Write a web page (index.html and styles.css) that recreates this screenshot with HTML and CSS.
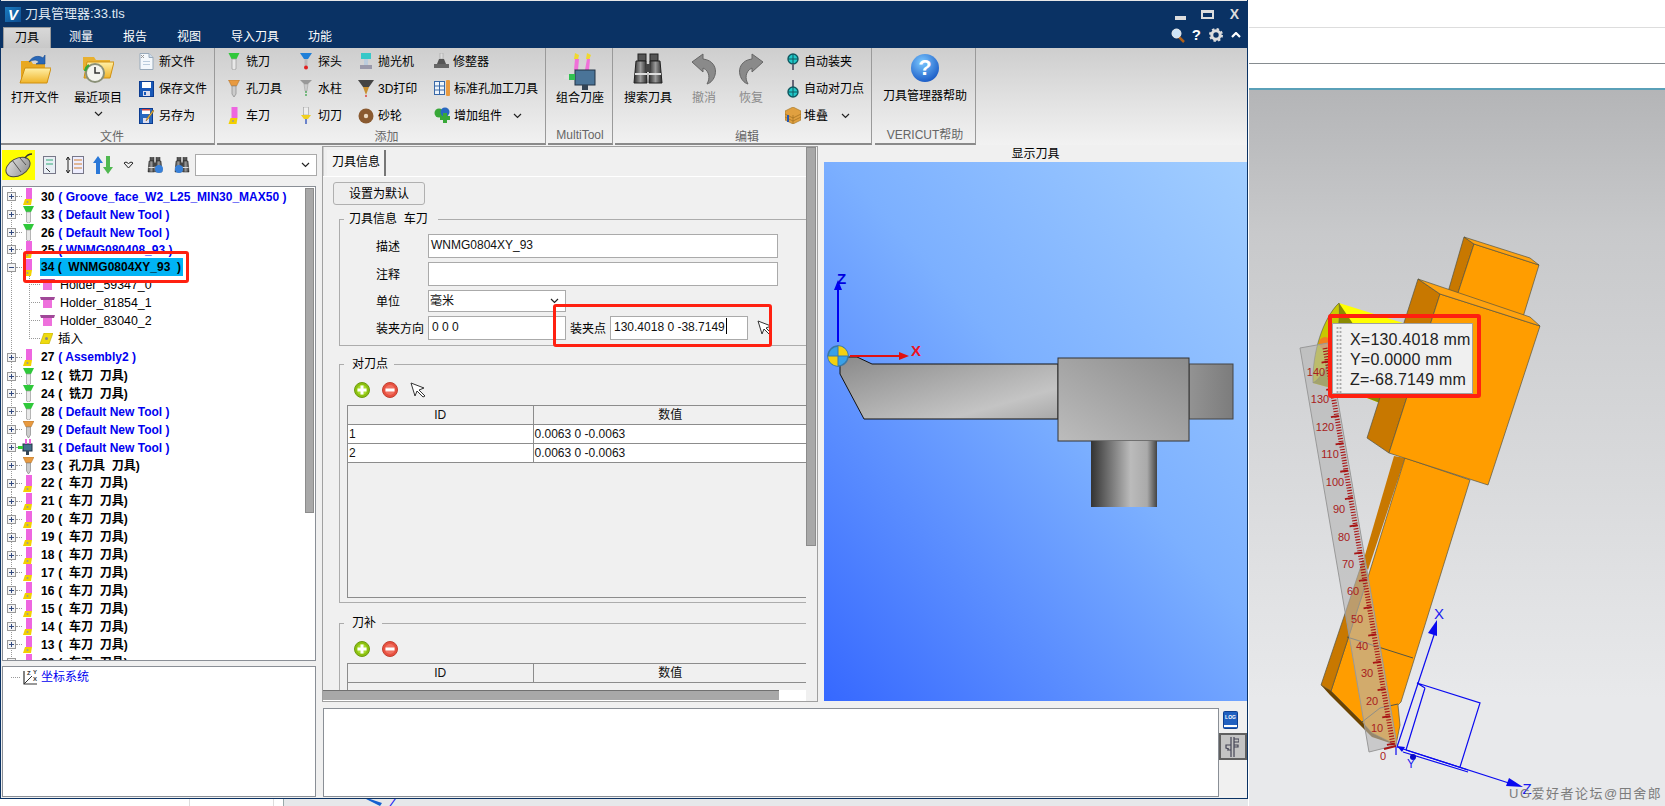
FILE: index.html
```html
<!DOCTYPE html>
<html lang="zh">
<head>
<meta charset="utf-8">
<title>刀具管理器:33.tls</title>
<link rel="stylesheet" href="styles.css">
</head>
<body>
<svg class="sprite" aria-hidden="true">
  <defs>
    <linearGradient id="gFolder" x1="0" y1="0" x2="0" y2="1"><stop offset="0" stop-color="#fff0a8"/><stop offset="1" stop-color="#f0b428"/></linearGradient>
    <linearGradient id="gBino" x1="0" y1="0" x2="1" y2="0"><stop offset="0" stop-color="#2c2c2c"/><stop offset=".5" stop-color="#9a9a9a"/><stop offset="1" stop-color="#2c2c2c"/></linearGradient>
    <linearGradient id="gMouse" x1="0" y1="0" x2="1" y2="1"><stop offset="0" stop-color="#e4e4e4"/><stop offset="1" stop-color="#8c8c8c"/></linearGradient>
    <radialGradient id="gHelp" cx=".4" cy=".3" r=".8"><stop offset="0" stop-color="#7cc8ff"/><stop offset="1" stop-color="#1050c0"/></radialGradient>
  </defs>
  <symbol id="mill" viewBox="0 0 11 17"><path d="M0 0h11L8 6H3z" fill="#2fc83a"/><path d="M3.500 6h4v10l-2 1-2-1z" fill="#e8e8e8" stroke="#999" stroke-width=".7"/></symbol>
  <symbol id="drill" viewBox="0 0 11 17"><path d="M0 0h11L8 6H3z" fill="#e89a40" stroke="#a86820" stroke-width=".5"/><path d="M3.500 6h4v8l-2 3-2-3z" fill="#ccc" stroke="#888" stroke-width=".7"/></symbol>
  <symbol id="turn" viewBox="0 0 11 17"><rect x="3" y="0" width="6" height="11" fill="#ee66e0"/><path d="M2 11h7l-1 6H0z" fill="#f2d000"/><circle cx="4.500" cy="14" r="1" fill="#999"/></symbol>
  <symbol id="asm" viewBox="0 0 16 17"><rect x="5" y="5" width="9" height="7" fill="#46708c" stroke="#234"/><rect x="0" y="7" width="5" height="3" fill="#3c3"/><rect x="7" y="0" width="2" height="5" fill="#e6d"/><rect x="11" y="0" width="2" height="5" fill="#e6d"/><rect x="8" y="12" width="3" height="4" fill="#345"/></symbol>
  <symbol id="holder" viewBox="0 0 15 12"><path d="M0 0h15l-1 3H1z" fill="#a04898"/><path d="M3 3h9v8H3z" fill="#ee70dc"/></symbol>
  <symbol id="insert" viewBox="0 0 13 11"><path d="M4 0h9L9 11H0z" fill="#eeda10" stroke="#b8a800" stroke-width=".6"/><circle cx="6.500" cy="5.500" r="1.500" fill="#888"/></symbol>
  <symbol id="plusbox" viewBox="0 0 9 9"><rect x=".5" y=".5" width="8" height="8" fill="#f4f4f4" stroke="#999"/><path d="M2 4.500h5M4.500 2v5" stroke="#334a80"/></symbol>
  <symbol id="minusbox" viewBox="0 0 9 9"><rect x=".5" y=".5" width="8" height="8" fill="#f4f4f4" stroke="#999"/><path d="M2 4.500h5" stroke="#334a80"/></symbol>
  <symbol id="add" viewBox="0 0 16 16"><circle cx="8" cy="8" r="7.500" fill="#8cc010" stroke="#6c9a10"/><circle cx="8" cy="8" r="5" fill="#a8dc30"/><path d="M8 3.500v9M3.500 8h9" stroke="#fff" stroke-width="3"/></symbol>
  <symbol id="del" viewBox="0 0 16 16"><circle cx="8" cy="8" r="7.500" fill="#e85040" stroke="#c04030"/><circle cx="8" cy="8" r="5" fill="#f07060"/><path d="M3.500 8h9" stroke="#fff" stroke-width="3"/></symbol>
  <symbol id="cursor" viewBox="0 0 16 16"><path d="M1 1l13 5-5 2 6 6-2 1-6-6-2 5z" fill="#fff" stroke="#333"/></symbol>
  <symbol id="chev" viewBox="0 0 9 6"><path d="M1 1l3.500 3.500L8 1" fill="none" stroke="#222" stroke-width="1.200"/></symbol>
  <symbol id="bino" viewBox="0 0 32 32"><rect x="6" y="1" width="8" height="7" fill="#555" stroke="#222"/><rect x="18" y="1" width="8" height="7" fill="#555" stroke="#222"/><path d="M4 8h10l1 22H2z" fill="url(#gBino)" stroke="#222"/><path d="M18 8h10l2 22H17z" fill="url(#gBino)" stroke="#222"/><rect x="14" y="11" width="4" height="8" fill="#444"/><path d="M3 21h12M17 21h12" stroke="#ddd" stroke-width="2"/></symbol>
</svg>

<div class="screen">
  <div class="app">
    <header class="titlebar">
      <div class="title-row">
        <span class="logo">V</span>
        <span class="title-text">刀具管理器:33.tls</span>
        <div class="winbtns">
          <span class="wb-min"></span>
          <span class="wb-max"></span>
          <span class="wb-close">X</span>
        </div>
      </div>
      <div class="tab-row">
        <span class="mtab mtab-on">刀具</span>
        <span class="mtab mtab-a">测量</span>
        <span class="mtab mtab-b">报告</span>
        <span class="mtab mtab-b">视图</span>
        <span class="mtab mtab-c">导入刀具</span>
        <span class="mtab mtab-d">功能</span>
        <div class="helpbtns">
          <svg width="14" height="15" viewBox="0 0 14 15"><path d="M8 9l5 5" stroke="#b06018" stroke-width="2.500"/><circle cx="5.500" cy="5.500" r="4.500" fill="#cfe6fa" stroke="#eee"/></svg>
          <span class="hb-q">?</span>
          <svg width="14" height="14" viewBox="0 0 14 14"><circle cx="7" cy="7" r="4.200" fill="none" stroke="#ddd" stroke-width="3"/><circle cx="7" cy="7" r="6" fill="none" stroke="#ddd" stroke-width="2" stroke-dasharray="2.400 2.300"/></svg>
          <svg width="10" height="6" viewBox="0 0 10 6"><path d="M1 5l4-4 4 4" fill="none" stroke="#fff" stroke-width="2.200"/></svg>
        </div>
      </div>
    </header>

    <section class="ribbon">
      <div class="group g-file">
        <div class="group-body">
          <div class="big b-open">
            <svg class="big-ico" width="32" height="32" viewBox="0 0 32 32"><path d="M2 8h10l2 3h12v19H2z" fill="#e8a820"/><path d="M6 15h26l-4 15H1z" fill="url(#gFolder)" stroke="#d09010"/><path d="M10 9c3-6 10-7 14-4l2-3v9h-9l3-2c-3-3-7-2-10 0z" fill="#2a68b8" stroke="#164a90" stroke-width=".6"/></svg>
            <span>打开文件</span>
          </div>
          <div class="big b-recent">
            <svg class="big-ico" width="32" height="32" viewBox="0 0 32 32"><path d="M1 4h11l2 3h14v10H1z" fill="#e8b030"/><path d="M5 9h27l-4 16H2z" fill="url(#gFolder)" stroke="#d09010"/><circle cx="13" cy="20" r="10" fill="#8a9078"/><circle cx="13" cy="20" r="8" fill="#f4f4ee"/><path d="M13 14v6h5" fill="none" stroke="#333" stroke-width="1.500"/><path d="M3 18a10 10 0 0 1 4-6" fill="none" stroke="#38a838" stroke-width="2.500"/></svg>
            <span>最近项目</span>
            <svg class="chev" width="9" height="6"><use href="#chev"/></svg>
          </div>
          <div class="col c-file">
            <div class="sm"><svg class="ico" width="15" height="17" viewBox="0 0 15 17"><path d="M1 .5h9l4 4v12H1z" fill="#f4f8fc" stroke="#9ab"/><path d="M10 .5v4h4" fill="#cde" stroke="#9ab"/><path d="M2 2l3 3M5 2L2 5" stroke="#999"/><rect x="4" y="8" width="7" height="1" fill="#bcd"/><rect x="4" y="11" width="7" height="1" fill="#bcd"/></svg><span>新文件</span></div>
            <div class="sm"><svg class="ico" width="15" height="16" viewBox="0 0 15 16"><rect x=".5" y=".5" width="14" height="15" fill="#1858b8" stroke="#0c3c90"/><rect x="3" y="1" width="9" height="6" fill="#fff"/><rect x="4" y="10" width="7" height="5" fill="#dde"/><rect x="5" y="11" width="2" height="3" fill="#1858b8"/></svg><span>保存文件</span></div>
            <div class="sm"><svg class="ico" width="15" height="16" viewBox="0 0 15 16"><rect x=".5" y=".5" width="13" height="15" fill="#2868c0" stroke="#0c3c90"/><rect x="3" y="1" width="8" height="5" fill="#fff"/><rect x="3" y="1" width="8" height="1.500" fill="#d04040"/><rect x="4" y="10" width="6" height="5" fill="#dde"/><path d="M7 13l1-3 6-8 1 1-6 8z" fill="#f0c040" stroke="#805010" stroke-width=".5"/></svg><span>另存为</span></div>
          </div>
        </div>
        <div class="group-label">文件</div>
      </div>

      <div class="group g-add">
        <div class="group-body">
          <div class="col c-a1">
            <div class="sm"><svg class="ico" width="12" height="17"><use href="#mill"/></svg><span>铣刀</span></div>
            <div class="sm"><svg class="ico" width="12" height="17"><use href="#drill"/></svg><span>孔刀具</span></div>
            <div class="sm"><svg class="ico" width="12" height="17"><use href="#turn"/></svg><span>车刀</span></div>
          </div>
          <div class="col c-a2">
            <div class="sm"><svg class="ico" width="12" height="17" viewBox="0 0 12 17"><path d="M0 0h12L8 6H4z" fill="#2080d8"/><rect x="4.500" y="6" width="3" height="7" fill="#bbb"/><circle cx="6" cy="14.500" r="2" fill="#e02020"/></svg><span>探头</span></div>
            <div class="sm"><svg class="ico" width="12" height="17" viewBox="0 0 12 17"><path d="M0 0h12L8 4H4z" fill="#999"/><path d="M4 4h4l-1 7H5z" fill="#ccc" stroke="#999" stroke-width=".5"/><path d="M6 11v5" stroke="#30a040" stroke-width="1.200" stroke-dasharray="2 1"/></svg><span>水柱</span></div>
            <div class="sm"><svg class="ico" width="12" height="17" viewBox="0 0 12 17"><rect x="3.500" y="0" width="5" height="8" fill="#eee" stroke="#999" stroke-width=".6"/><path d="M1 8h10L8 12H4z" fill="#f0d020"/><path d="M6 12v5" stroke="#4060c0" stroke-width="1.500"/></svg><span>切刀</span></div>
          </div>
          <div class="col c-a3">
            <div class="sm"><svg class="ico" width="14" height="17" viewBox="0 0 14 17"><rect x="2" y="0" width="10" height="6" fill="#38c8c8"/><rect x="5" y="6" width="4" height="6" fill="#bcd"/><rect x="1" y="12" width="12" height="4" fill="#99a"/></svg><span>抛光机</span></div>
            <div class="sm"><svg class="ico" width="16" height="17" viewBox="0 0 16 17"><path d="M0 0h16l-5 7H5z" fill="#444"/><path d="M5 7h6l-3 8z" fill="#c89030"/><circle cx="8" cy="16" r="1" fill="#e04040"/></svg><span>3D打印</span></div>
            <div class="sm"><svg class="ico" width="16" height="16" viewBox="0 0 16 16"><circle cx="8" cy="8" r="7.500" fill="#8a5a30"/><circle cx="8" cy="8" r="2.200" fill="#ead8c0"/></svg><span>砂轮</span></div>
          </div>
          <div class="col c-a4">
            <div class="sm"><svg class="ico" width="16" height="17" viewBox="0 0 16 17"><rect x="6" y="0" width="3" height="6" fill="#ddd" stroke="#999" stroke-width=".5"/><path d="M5 6h5l2 5H3z" fill="#555"/><rect x="0" y="11" width="15" height="4" fill="#666"/></svg><span>修整器</span></div>
            <div class="sm"><svg class="ico" width="17" height="17" viewBox="0 0 17 17"><rect x=".5" y="1.500" width="10" height="13" fill="#eef4fa" stroke="#3868a8"/><path d="M5.500 2v12M1 6h9M1 10h9" stroke="#3868a8"/><rect x="12" y="0" width="4" height="16" rx="1" fill="#e89a40"/></svg><span>标准孔加工刀具</span></div>
            <div class="sm"><svg class="ico" width="17" height="17" viewBox="0 0 17 17"><circle cx="5" cy="6" r="4.500" fill="#38a838"/><circle cx="11" cy="5" r="4.500" fill="#2868c0"/><path d="M11 6v10M6 11h10" stroke="#38a838" stroke-width="4"/></svg><span>增加组件</span><svg class="chev chev-sm" width="9" height="6"><use href="#chev"/></svg></div>
          </div>
        </div>
        <div class="group-label">添加</div>
      </div>

      <div class="group g-multi">
        <div class="group-body">
          <div class="big b-multi">
            <svg class="big-ico" width="32" height="38" viewBox="0 0 32 38"><path d="M11 0l4 2-1 5-4-1zM23 0l4 2-2 5-3-1z" fill="#f0d830"/><path d="M11 6h4l-1 11h-4zM23 6h3l-1 11h-4z" fill="#f070d8"/><rect x="11" y="17" width="20" height="15" fill="#4a7498" stroke="#234"/><rect x="5" y="21" width="6" height="6" fill="#30c050"/><rect x="0" y="22" width="5" height="4" fill="#ddd"/><rect x="18" y="32" width="6" height="5" fill="#345"/></svg>
            <span>组合刀座</span>
          </div>
        </div>
        <div class="group-label">MultiTool</div>
      </div>

      <div class="group g-edit">
        <div class="group-body">
          <div class="big b-search">
            <svg class="big-ico" width="32" height="32"><use href="#bino"/></svg>
            <span>搜索刀具</span>
          </div>
          <div class="big b-undo is-off">
            <svg class="big-ico" width="26" height="32" viewBox="0 0 26 32"><path d="M1 9l11-8v5c10 1 14 9 12 16-1 4-4 8-8 9 3-5 3-13-4-16v4z" fill="#8a8a8a" stroke="#666"/></svg>
            <span>撤消</span>
          </div>
          <div class="big b-redo is-off">
            <svg class="big-ico" width="26" height="32" viewBox="0 0 26 32"><path d="M25 9L14 1v5C4 7 0 15 2 22c1 4 4 8 8 9-3-5-3-13 4-16v4z" fill="#8a8a8a" stroke="#666"/></svg>
            <span>恢复</span>
          </div>
          <div class="col c-edit">
            <div class="sm"><svg class="ico" width="13" height="18" viewBox="0 0 13 18"><circle cx="6.500" cy="6" r="5" fill="#20c8c8" stroke="#105860" stroke-width="1.400"/><path d="M6.500 1v10M1.500 6h10" stroke="#105860"/><path d="M6.500 11v6" stroke="#667" stroke-width="2"/></svg><span>自动装夹</span></div>
            <div class="sm"><svg class="ico" width="13" height="18" viewBox="0 0 13 18"><path d="M6.500 0v7" stroke="#667" stroke-width="2"/><circle cx="6.500" cy="12" r="5" fill="#20c8c8" stroke="#105860" stroke-width="1.400"/><path d="M6.500 7v10M1.500 12h10" stroke="#105860"/></svg><span>自动对刀点</span></div>
            <div class="sm"><svg class="ico" width="16" height="17" viewBox="0 0 16 17"><path d="M0 4l8-4 8 4v9l-8 4-8-4z" fill="#e0a040" stroke="#a07020" stroke-width=".6"/><path d="M0 7l8 4 8-4M0 10l8 4 8-4M8 8v9" fill="none" stroke="#a07020" stroke-width=".7"/><rect x="2" y="8" width="2" height="7" fill="#2858b0"/></svg><span>堆叠</span><svg class="chev chev-xs" width="9" height="6"><use href="#chev"/></svg></div>
          </div>
        </div>
        <div class="group-label">编辑</div>
      </div>

      <div class="group g-help">
        <div class="group-body">
          <div class="big b-help">
            <svg class="big-ico" width="30" height="30" viewBox="0 0 30 30"><circle cx="15" cy="15" r="14" fill="url(#gHelp)"/><text x="15" y="22" class="help-q">?</text></svg>
            <span>刀具管理器帮助</span>
          </div>
        </div>
        <div class="group-label">VERICUT帮助</div>
      </div>
    </section>

    <div class="workspace">
      <aside class="left">
        <div class="toolbar">
          <span class="mouse-btn"><svg width="30" height="26" viewBox="0 0 30 26"><ellipse cx="14" cy="15" rx="13" ry="8.500" transform="rotate(-30 14 15)" fill="url(#gMouse)" stroke="#444"/><path d="M8 8l9 12M16 6l6 7" stroke="#555" fill="none"/><path d="M21 6c2-3 4-4 7-4" fill="none" stroke="#333" stroke-width="1.500"/></svg></span>
          <svg class="tb t1" width="13" height="18" viewBox="0 0 13 18"><rect x=".5" y=".5" width="12" height="17" fill="#e8eef4" stroke="#778"/><path d="M3 4h7M3 8h7" stroke="#3a7"/><path d="M3 12l4 4" stroke="#333"/></svg>
          <svg class="tb t2" width="18" height="18" viewBox="0 0 18 18"><path d="M2 1v16M0 4l2-3 2 3M0 14l2 3 2-3" fill="none" stroke="#222"/><rect x="6.500" y=".5" width="11" height="17" fill="#eef" stroke="#778"/><path d="M8 4h8M8 8h8M8 12h8" stroke="#d08030"/></svg>
          <svg class="tb t3" width="20" height="18" viewBox="0 0 20 18"><path d="M5 0l5 7H7v11H3V7H0z" fill="#2a78d8"/><path d="M15 18l5-7h-3V0h-4v11h-3z" fill="#50b850"/></svg>
          <svg class="tb t4" width="11" height="8" viewBox="0 0 11 8"><path d="M1 2l2-1 2.500 1.500L8 1l2 1-4.500 5z" fill="none" stroke="#222"/></svg>
          <svg class="tb t5" width="16" height="16" viewBox="0 0 32 32"><use href="#bino"/><circle cx="24" cy="24" r="8" fill="#3880d8"/></svg>
          <svg class="tb t6" width="16" height="16" viewBox="0 0 32 32"><use href="#bino"/><circle cx="10" cy="24" r="8" fill="#3880d8"/></svg>
          <div class="combo"><svg width="9" height="6"><use href="#chev"/></svg></div>
        </div>

        <div class="tree-panel">
          <div class="tree">
            <div class="row"><svg class="exp" width="9" height="9"><use href="#plusbox"/></svg><i class="dots"></i><svg class="ti" width="11" height="17"><use href="#turn"/></svg><b>30</b><b class="blue">( Groove_face_W2_L25_MIN30_MAX50 )</b></div>
            <div class="row"><svg class="exp" width="9" height="9"><use href="#plusbox"/></svg><i class="dots"></i><svg class="ti" width="11" height="17"><use href="#mill"/></svg><b>33</b><b class="blue">( Default New Tool )</b></div>
            <div class="row"><svg class="exp" width="9" height="9"><use href="#plusbox"/></svg><i class="dots"></i><svg class="ti" width="11" height="17"><use href="#mill"/></svg><b>26</b><b class="blue">( Default New Tool )</b></div>
            <div class="row row-short"><svg class="exp" width="9" height="9"><use href="#plusbox"/></svg><i class="dots"></i><svg class="ti" width="11" height="17"><use href="#turn"/></svg><b>25</b><b class="blue">( WNMG080408_93 )</b></div>
            <div class="row"><svg class="exp" width="9" height="9"><use href="#minusbox"/></svg><i class="dots"></i><svg class="ti" width="11" height="17"><use href="#turn"/></svg><b class="sel">34 (  WNMG0804XY_93  )</b></div>
            <div class="row child"><i class="dots-long"></i><svg class="hi" width="15" height="12"><use href="#holder"/></svg><span>Holder_59347_0</span></div>
            <div class="row child"><i class="dots-long"></i><svg class="hi" width="15" height="12"><use href="#holder"/></svg><span>Holder_81854_1</span></div>
            <div class="row child"><i class="dots-long"></i><svg class="hi" width="15" height="12"><use href="#holder"/></svg><span>Holder_83040_2</span></div>
            <div class="row child child-end"><i class="dots-long"></i><svg class="hi" width="13" height="11"><use href="#insert"/></svg><span>插入</span></div>
            <div class="row row-tall"><svg class="exp" width="9" height="9"><use href="#plusbox"/></svg><i class="dots"></i><svg class="ti" width="11" height="17"><use href="#turn"/></svg><b>27</b><b class="blue">( Assembly2 )</b></div>
            <div class="row"><svg class="exp" width="9" height="9"><use href="#plusbox"/></svg><i class="dots"></i><svg class="ti" width="11" height="17"><use href="#mill"/></svg><b>12</b><b>(  铣刀  刀具)</b></div>
            <div class="row"><svg class="exp" width="9" height="9"><use href="#plusbox"/></svg><i class="dots"></i><svg class="ti" width="11" height="17"><use href="#mill"/></svg><b>24</b><b>(  铣刀  刀具)</b></div>
            <div class="row"><svg class="exp" width="9" height="9"><use href="#plusbox"/></svg><i class="dots"></i><svg class="ti" width="11" height="17"><use href="#mill"/></svg><b>28</b><b class="blue">( Default New Tool )</b></div>
            <div class="row"><svg class="exp" width="9" height="9"><use href="#plusbox"/></svg><i class="dots"></i><svg class="ti" width="11" height="17"><use href="#drill"/></svg><b>29</b><b class="blue">( Default New Tool )</b></div>
            <div class="row"><svg class="exp" width="9" height="9"><use href="#plusbox"/></svg><i class="dots"></i><svg class="ti ti-asm" width="16" height="17"><use href="#asm"/></svg><b>31</b><b class="blue">( Default New Tool )</b></div>
            <div class="row"><svg class="exp" width="9" height="9"><use href="#plusbox"/></svg><i class="dots"></i><svg class="ti" width="11" height="17"><use href="#drill"/></svg><b>23</b><b>(  孔刀具  刀具)</b></div>
            <div class="row"><svg class="exp" width="9" height="9"><use href="#plusbox"/></svg><i class="dots"></i><svg class="ti" width="11" height="17"><use href="#turn"/></svg><b>22</b><b>(  车刀  刀具)</b></div>
            <div class="row"><svg class="exp" width="9" height="9"><use href="#plusbox"/></svg><i class="dots"></i><svg class="ti" width="11" height="17"><use href="#turn"/></svg><b>21</b><b>(  车刀  刀具)</b></div>
            <div class="row"><svg class="exp" width="9" height="9"><use href="#plusbox"/></svg><i class="dots"></i><svg class="ti" width="11" height="17"><use href="#turn"/></svg><b>20</b><b>(  车刀  刀具)</b></div>
            <div class="row"><svg class="exp" width="9" height="9"><use href="#plusbox"/></svg><i class="dots"></i><svg class="ti" width="11" height="17"><use href="#turn"/></svg><b>19</b><b>(  车刀  刀具)</b></div>
            <div class="row"><svg class="exp" width="9" height="9"><use href="#plusbox"/></svg><i class="dots"></i><svg class="ti" width="11" height="17"><use href="#turn"/></svg><b>18</b><b>(  车刀  刀具)</b></div>
            <div class="row"><svg class="exp" width="9" height="9"><use href="#plusbox"/></svg><i class="dots"></i><svg class="ti" width="11" height="17"><use href="#turn"/></svg><b>17</b><b>(  车刀  刀具)</b></div>
            <div class="row"><svg class="exp" width="9" height="9"><use href="#plusbox"/></svg><i class="dots"></i><svg class="ti" width="11" height="17"><use href="#turn"/></svg><b>16</b><b>(  车刀  刀具)</b></div>
            <div class="row"><svg class="exp" width="9" height="9"><use href="#plusbox"/></svg><i class="dots"></i><svg class="ti" width="11" height="17"><use href="#turn"/></svg><b>15</b><b>(  车刀  刀具)</b></div>
            <div class="row"><svg class="exp" width="9" height="9"><use href="#plusbox"/></svg><i class="dots"></i><svg class="ti" width="11" height="17"><use href="#turn"/></svg><b>14</b><b>(  车刀  刀具)</b></div>
            <div class="row"><svg class="exp" width="9" height="9"><use href="#plusbox"/></svg><i class="dots"></i><svg class="ti" width="11" height="17"><use href="#turn"/></svg><b>13</b><b>(  车刀  刀具)</b></div>
            <div class="row"><svg class="exp" width="9" height="9"><use href="#plusbox"/></svg><i class="dots"></i><svg class="ti" width="11" height="17"><use href="#turn"/></svg><b>20</b><b>(  车刀  刀具)</b></div>
          </div>
          <div class="tree-bar"><div class="tree-thumb"></div></div>
        </div>

        <div class="csys-panel">
          <div class="csys-row">
            <i class="csys-dots"></i>
            <svg width="16" height="17" viewBox="0 0 16 17"><path d="M2 2v13h13" fill="none" stroke="#333" stroke-width="1.200"/><path d="M2 15l8-8" stroke="#333"/><text x="5" y="6" class="csys-t">Z</text><text x="11" y="5" class="csys-t">Y</text><text x="11" y="12" class="csys-t">X</text></svg>
            <span>坐标系统</span>
          </div>
        </div>
      </aside>

      <div class="main">
        <div class="main-top">
          <div class="center">
            <div class="form-area">
              <div class="tabstrip"><span class="tab">刀具信息</span></div>
              <button class="btn-default" type="button">设置为默认</button>
              <fieldset class="fs fs-info">
                <legend>刀具信息  车刀</legend>
                <div class="frow"><label>描述</label><div class="field f-wide">WNMG0804XY_93</div></div>
                <div class="frow"><label>注释</label><div class="field f-wide"></div></div>
                <div class="frow frow-s"><label>单位</label><div class="field f-half f-sel"><span>毫米</span><svg width="9" height="6"><use href="#chev"/></svg></div></div>
                <div class="frow"><label>装夹方向</label><div class="field f-half">0 0 0</div><label class="lbl-grip">装夹点</label><div class="field f-half">130.4018 0 -38.7149<i class="caret"></i></div><svg class="pick" width="16" height="16"><use href="#cursor"/></svg></div>
              </fieldset>
              <fieldset class="fs fs-gauge">
                <legend class="lg-wide">对刀点</legend>
                <div class="iconrow"><svg width="16" height="16"><use href="#add"/></svg><svg width="16" height="16"><use href="#del"/></svg><svg width="16" height="16"><use href="#cursor"/></svg></div>
                <div class="gridbox">
                  <table class="grid">
                    <tr><th class="c-id">ID</th><th>数值</th></tr>
                    <tr><td>1</td><td>0.0063 0 -0.0063</td></tr>
                    <tr><td>2</td><td>0.0063 0 -0.0063</td></tr>
                  </table>
                </div>
              </fieldset>
              <fieldset class="fs fs-comp">
                <legend class="lg-wide">刀补</legend>
                <div class="iconrow iconrow-c"><svg width="16" height="16"><use href="#add"/></svg><svg width="16" height="16"><use href="#del"/></svg></div>
                <div class="gridbox">
                  <table class="grid">
                    <tr><th class="c-id">ID</th><th>数值</th></tr>
                  </table>
                </div>
              </fieldset>
            </div>
            <div class="vbar"><div class="vthumb"></div></div>
            <div class="hbar"><div class="hthumb"></div></div>
            <div class="corner"></div>
          </div>
          <div class="preview">
            <div class="preview-title">显示刀具</div>
            <svg class="preview-view" viewBox="824 163 423 539">
              <defs>
                <linearGradient id="gBody" x1="0" y1="0" x2="1" y2="1"><stop offset="0" stop-color="#8a8a8a"/><stop offset=".75" stop-color="#c4c4c4"/><stop offset="1" stop-color="#a8a8a8"/></linearGradient>
                <linearGradient id="gBlock" x1="1" y1="0" x2="0" y2="1"><stop offset="0" stop-color="#8c8c8c"/><stop offset="1" stop-color="#bcbcbc"/></linearGradient>
                <linearGradient id="gTail" x1="0" y1="0" x2="1" y2="0"><stop offset="0" stop-color="#939393"/><stop offset="1" stop-color="#7c7c7c"/></linearGradient>
                <linearGradient id="gCyl" x1="0" y1="0" x2="1" y2="0"><stop offset="0" stop-color="#333"/><stop offset=".3" stop-color="#777"/><stop offset=".6" stop-color="#bbb"/><stop offset=".85" stop-color="#aaa"/><stop offset="1" stop-color="#444"/></linearGradient>
              </defs>
              <path d="M840 367v8l24 45h194v-55H872l-15-7h-9z" fill="url(#gBody)" stroke="#111" stroke-width="1"/>
              <rect x="1189" y="365" width="44" height="55" fill="url(#gTail)" stroke="#444" stroke-width="1"/>
              <rect x="1058" y="359" width="131" height="83" fill="url(#gBlock)" stroke="#333" stroke-width="1"/>
              <rect x="1091" y="442" width="66" height="66" fill="url(#gCyl)"/>
              <path d="M838 343v-55" stroke="#0000f0" stroke-width="2"/>
              <path d="M838 281l4 10h-8z" fill="#0000f0"/>
              <text x="837" y="285" class="ax ax-z">Z</text>
              <path d="M850 357h50" stroke="#e01010" stroke-width="2"/>
              <path d="M909 357l-10 4v-8z" fill="#e01010"/>
              <text x="911" y="357" class="ax ax-x">X</text>
              <circle cx="838" cy="357" r="10" fill="#38a0e8" stroke="#3878a8" stroke-width="1.500"/>
              <path d="M838 347a10 10 0 0 1 10 10h-10zM838 367a10 10 0 0 1-10-10h10z" fill="#f4d010"/>
              <path d="M827 357h22M838 346v22" stroke="#3878a8" stroke-width="1"/>
            </svg>
          </div>
        </div>
        <div class="log-row">
          <div class="log"></div>
          <div class="log-tools">
            <svg class="log-book" width="15" height="18" viewBox="0 0 15 18"><rect x=".5" y=".5" width="14" height="17" rx="1" fill="#2060c0" stroke="#104090"/><rect x="1" y="14" width="13" height="2" fill="#fff"/><text x="7.500" y="8" class="log-t">LOG</text></svg>
            <span class="log-active"><svg width="14" height="22" viewBox="0 0 14 22"><path d="M6 1v20M9 1v20M9 3h5v3H9M9 9h4v2H9M6 9H1v3l3 1M6 14H2" fill="none" stroke="#445" stroke-width="1.200"/></svg></span>
          </div>
        </div>
      </div>
    </div>
  </div>

  <div class="scene">
    <div class="scene-top"></div>
    <div class="scene-mid"></div>
    <svg class="scene-view" viewBox="1249 90 416 716">
      <path d="M1464 237l10 7-17 52-9-4z" fill="#c87800" stroke="#554" stroke-width=".7"/>
      <path d="M1474 244l65 21-16 52-66-21z" fill="#ff9d00" stroke="#554" stroke-width=".7"/>
      <path d="M1464 237l66 21 9 7-65-21z" fill="#ffa310" stroke="#554" stroke-width=".7"/>

      <path d="M1339 303l64 20-3 72-7 13-26-10-54-15c1-30 10-65 26-80z" fill="#ffff00"/>
      <path d="M1339 303c-16 15-25 50-26 80l54 15 26 10 10-10" fill="#8a8a00"/>
      <path d="M1339 303c3 30-10 70-26 80-1-30 10-65 26-80z" fill="#c8c800" stroke="#555" stroke-width=".6"/>
      <circle cx="1325" cy="343" r="6" fill="#f08020"/>

      <path d="M1394 456l11 2-37 112-5-8z" fill="#c87800"/>
      <path d="M1405 458l65 22-69 222-3 3 2 20-4 20-24-12-10-11-31-31 37-114z" fill="#ff9d00" stroke="#554" stroke-width=".7"/>
      <path d="M1363 560l5 17-37 114-10-6z" fill="#c87800" stroke="#554" stroke-width=".7"/>
      <path d="M1321 685l10 6 31 31 10 11 24 12-24-8-12-12-30-30z" fill="#6c4400"/>
      <path d="M1347 637l66 21M1362 722l18-14 18-4" fill="none" stroke="#554" stroke-width="1"/>

      <path d="M1418 279l22 15-51 159-22-15z" fill="#c87800" stroke="#554" stroke-width=".7"/>
      <path d="M1440 294l100 32-52 159-99-32z" fill="#ff9d00" stroke="#554" stroke-width=".7"/>
      <path d="M1418 279l112 38 10 9-100-32z" fill="#ffa310" stroke="#554" stroke-width=".7"/>

      <path d="M1300 348l28-5 69 402-28 7z" fill="#b4b4b4" fill-opacity=".6" stroke="#999" stroke-width="1"/>
      <path d="M1393 745l-68-397" stroke="#a81414" stroke-width="5" stroke-dasharray="1.100 1.670"/>
      <path d="M1391 745l-67-392" stroke="#a81414" stroke-width="8" stroke-dasharray="1.800 25.900"/>
      <g class="rule">
        <text x="1383" y="760">0</text><text x="1377" y="732">10</text><text x="1372" y="705">20</text><text x="1367" y="677">30</text><text x="1362" y="650">40</text><text x="1357" y="623">50</text><text x="1353" y="595">60</text><text x="1348" y="568">70</text><text x="1344" y="541">80</text><text x="1339" y="513">90</text><text x="1335" y="486">100</text><text x="1330" y="458">110</text><text x="1325" y="431">120</text><text x="1320" y="403">130</text><text x="1316" y="376">140</text>
      </g>
      <path d="M1384 749l12-3" stroke="#a81414" stroke-width="2"/>

      <g class="triad">
        <path d="M1397 747l38-115"/>
        <path d="M1417 683l63 20-20 64M1425 688l-19 62M1417 683l8 5"/>
        <path d="M1397 747l118 38"/>
        <path d="M1403 752l65 20M1406 750l62 20"/>
        <path d="M1396 747v8"/>
      </g>
      <path d="M1437 620l0 16-9-3z" fill="#0a0af0"/>
      <path d="M1523 787l-17-1 3-8z" fill="#0a0af0"/>
      <path d="M1397 746l8 1-3 5z" fill="#0a0af0"/>
      <circle cx="1413" cy="757" r="3" fill="#0a0ac8"/>
      <text x="1439" y="619" class="tri-t">X</text>
      <text x="1527" y="794" class="tri-t">Z</text>
      <text x="1411" y="768" class="tri-t tri-s">Y</text>
    </svg>
    <div class="tooltip">
      <i class="grip"></i>
      <div class="tip-text">
        <div>X=130.4018 mm</div>
        <div>Y=0.0000 mm</div>
        <div>Z=-68.7149 mm</div>
      </div>
    </div>
    <div class="callout callout-tip"></div>
    <div class="watermark">UG爱好者论坛@田舍郎</div>
  </div>

  <div class="taskbar">
    <span class="tk tk-a"></span>
    <span class="tk tk-b"></span>
    <span class="tk-gap"></span>
    <div class="tk-rest"><svg width="26" height="7" viewBox="0 0 26 7"><path d="M0 0h4l12 4-2 3z" fill="#1460d0"/></svg><span>Z</span></div>
  </div>
</div>

<div class="callout callout-tree"></div>
<div class="callout callout-form"></div>
</body>
</html>
```

FILE: styles.css
```css
* { box-sizing: border-box; }
html, body { margin: 0; padding: 0; }
body {
  width: 1665px;
  height: 806px;
  overflow: hidden;
  position: relative;
  background: #fff;
  font: 12px/16px "Liberation Sans", "Noto Sans CJK SC", sans-serif;
  color: #000;
}
.sprite { position: absolute; width: 0; height: 0; }

.screen {
  display: grid;
  grid-template-columns: 1248px 1fr;
  grid-template-rows: 799px 7px;
  height: 806px;
}

/* application window */
.app {
  grid-column: 1;
  grid-row: 1;
  display: flex;
  flex-direction: column;
  background: #f0f0f0;
  border-left: 1px solid #0a3264;
  border-right: 1px solid #0a3264;
  border-bottom: 1px solid #0a3264;
}

.titlebar {
  height: 48px;
  flex: none;
  background: #0a3264;
  border-top: 1px solid #e8e8e8;
  color: #fff;
  display: flex;
  flex-direction: column;
}
.title-row {
  height: 26px;
  display: flex;
  align-items: center;
  padding: 0 7px 0 4px;
}
.logo {
  width: 16px;
  height: 15px;
  background: linear-gradient(135deg, #1c7cc0, #0c4c90);
  font: italic bold 15px/15px "Liberation Sans", sans-serif;
  text-align: center;
  color: #fff;
}
.title-text {
  margin-left: 4px;
  font-size: 13px;
  color: #dfe8f2;
}
.winbtns {
  margin-left: auto;
  display: flex;
  align-items: center;
}
.wb-min { width: 11px; height: 4px; background: #ddd; margin-top: 8px; }
.wb-max { width: 13px; height: 9px; margin-left: 15px; border: 2px solid #ddd; border-top-width: 3px; }
.wb-close {
  margin-left: 15px;
  width: 11px;
  font: bold 14px/14px "Liberation Sans", sans-serif;
  color: #ddd;
  text-align: center;
}

.tab-row {
  flex: 1;
  display: flex;
  align-items: flex-end;
  padding-left: 2px;
}
.mtab {
  font-size: 12px;
  line-height: 19px;
  height: 20px;
  color: #fff;
}
.mtab-on {
  width: 48px;
  height: 21px;
  line-height: 21px;
  text-align: center;
  color: #000;
  background: linear-gradient(#d8d8d8, #c8c8c8);
  border: 1px solid #9a9a9a;
  border-bottom: 0;
}
.mtab-a { margin-left: 18px; }
.mtab-b { margin-left: 30px; }
.mtab-c { margin-left: 30px; }
.mtab-d { margin-left: 29px; }
.helpbtns {
  margin-left: auto;
  margin-right: 6px;
  display: flex;
  align-items: center;
  gap: 8px;
  height: 21px;
  padding-bottom: 5px;
}
.hb-q { font: bold 15px/16px "Liberation Sans", sans-serif; color: #fff; margin: 0 0 0 -1px; }

/* ribbon */
.ribbon {
  height: 97px;
  flex: none;
  display: flex;
  background: linear-gradient(#cecece, #f2f2f2);
}
.group {
  display: flex;
  flex-direction: column;
  border-right: 1px solid #9a9a9a;
  border-bottom: 2px solid #8a8a8a;
  margin-right: 2px;
}
.group-body { flex: 1; display: flex; }
.group-label {
  height: 16px;
  line-height: 16px;
  text-align: center;
  color: #666;
}
.g-file { width: 214px; padding-left: 9px; }
.g-add { width: 329px; padding-left: 11px; }
.g-multi { width: 65px; }
.g-edit { width: 257px; padding-left: 8px; }
.g-help { width: 101px; margin-left: 1px; }

.big {
  display: flex;
  flex-direction: column;
  align-items: center;
  padding-top: 5px;
  width: 50px;
  text-align: center;
}
.big-ico { margin-bottom: 5px; flex: none; }
.big span { white-space: nowrap; }
.b-multi { width: 65px; padding-top: 5px; }
.b-multi .big-ico { margin-bottom: -1px; }
.b-recent { margin-left: 13px; }
.b-undo { width: 40px; margin-left: 11px; }
.b-redo { width: 40px; margin-left: 7px; }
.b-help { width: 100px; }
.is-off span { color: #8a8a8a; }
.chev { margin-top: 5px; }
.chev-sm { margin: 0 0 0 11px; }
.chev-xs { margin: 0 0 0 13px; }

.col { display: flex; flex-direction: column; }
.sm {
  height: 27px;
  display: flex;
  align-items: center;
  white-space: nowrap;
}
.ico { flex: none; }
.c-file { margin-left: 16px; }
.c-file .ico { margin-right: 5px; }
.c-a1 { width: 72px; }
.c-a1 .ico { margin-right: 6px; }
.c-a2 { width: 58px; }
.c-a2 .ico { margin-right: 6px; }
.c-a3 { width: 76px; }
.c-a3 .ico { width: 16px; margin-right: 4px; }
.c-a4 .ico { margin-right: 3px; }
.c-edit { margin-left: 14px; }
.c-edit .ico { width: 16px; margin-right: 3px; }

.help-q {
  font: bold 22px "Liberation Sans", sans-serif;
  fill: #fff;
  text-anchor: middle;
}

/* workspace */
.workspace { flex: 1; display: flex; min-height: 0; }

.left {
  width: 321px;
  flex: none;
  padding-left: 1px;
  display: flex;
  flex-direction: column;
}
.toolbar {
  height: 41px;
  flex: none;
  display: flex;
  align-items: center;
  padding: 0 0 1px 0;
  width: 314px;
}
.mouse-btn {
  width: 33px;
  height: 30px;
  background: #ffff00;
  display: flex;
  align-items: center;
  justify-content: center;
  flex: none;
}
.tb { flex: none; }
.t1 { margin-left: 8px; }
.t2 { margin-left: 10px; }
.t3 { margin-left: 9px; }
.t4 { margin-left: 10px; }
.t5 { margin-left: 13px; }
.t6 { margin-left: 11px; }
.combo {
  margin-left: 5px;
  width: 122px;
  height: 22px;
  background: #fff;
  border: 1px solid #aaa;
  display: flex;
  align-items: center;
  justify-content: flex-end;
  padding-right: 6px;
  flex: none;
}

.tree-panel {
  width: 314px;
  height: 475px;
  flex: none;
  background: #fff;
  border: 1px solid #8a8f96;
  display: flex;
  overflow: hidden;
}
.tree { flex: 1; min-width: 0; overflow: hidden; padding-top: 1px; }
.tree-bar { width: 11px; flex: none; padding: 1px 1px 0 1px; }
.tree-thumb { height: 325px; background: #a8a8a8; border: 1px solid #8c8c8c; }

.row {
  height: 17.92px;
  display: flex;
  align-items: center;
  white-space: pre;
  padding-left: 4px;
  background-image: repeating-linear-gradient(to bottom, #9a9a9a 0 1px, transparent 1px 2px);
  background-size: 1px 100%;
  background-position: 8px 0;
  background-repeat: no-repeat;
}
.row-short { height: 16.42px; }
.row-tall { height: 19.42px; }
.exp { flex: none; }
.dots { width: 6px; border-top: 1px dotted #999; flex: none; }
.ti { flex: none; margin: 0 7px 0 1px; }
.ti-asm { margin: 0 7px 0 -4px; }
.row b { font-weight: bold; font-size: 12px; }
.row b + b { margin-left: 4px; }
.blue { color: #0000f0; }
.sel {
  background: #00b4f5;
  height: 18px;
  line-height: 18px;
  width: 143px;
  margin-left: -1px;
  padding-left: 1px;
}
.child {
  padding-left: 26px;
  background-image:
    repeating-linear-gradient(to bottom, #9a9a9a 0 1px, transparent 1px 2px),
    repeating-linear-gradient(to bottom, #9a9a9a 0 1px, transparent 1px 2px);
  background-size: 1px 100%, 1px 100%;
  background-position: 8px 0, 26px 0;
  background-repeat: no-repeat, no-repeat;
}
.child-end { background-size: 1px 100%, 1px 50%; }
.dots-long { width: 11px; border-top: 1px dotted #999; flex: none; }
.hi { flex: none; margin-right: 5px; }
.child span { font-size: 12.4px; }

.csys-panel {
  width: 314px;
  height: 131px;
  flex: none;
  margin-top: 5px;
  background: #fff;
  border: 1px solid #8a8f96;
  padding: 1px 0 0 8px;
}
.csys-row {
  display: flex;
  align-items: center;
  height: 18px;
  color: #0000f0;
}
.csys-dots { width: 9px; border-top: 1px dotted #999; margin-right: 2px; }
.csys-row svg { margin-right: 3px; flex: none; }
.csys-t { font: bold 6px "Liberation Sans", sans-serif; fill: #333; }

/* centre and preview */
.main { flex: 1; min-width: 0; display: flex; flex-direction: column; }
.main-top {
  height: 558px;
  flex: none;
  display: flex;
  padding: 1px 0 1px 0;
}
.center {
  width: 496px;
  flex: none;
  border: 1px solid #a0a0a0;
  display: grid;
  grid-template-columns: 1fr 11px;
  grid-template-rows: 1fr 11px;
  background: #f0f0f0;
  min-height: 0;
}
.form-area {
  overflow: hidden;
  min-width: 0;
  min-height: 0;
}
.tabstrip {
  height: 30px;
  padding: 3px 0 0 4px;
  border-bottom: 1px solid #fff;
  box-shadow: inset 1px 0 0 #ccc;
}
.tab {
  display: block;
  width: 59px;
  height: 26px;
  line-height: 24px;
  padding-left: 5px;
  border-right: 2px solid #777;
  background: #f4f4f4;
}
.btn-default {
  display: block;
  margin: 5px 0 0 10px;
  width: 92px;
  height: 23px;
  padding: 0;
  background: #eee;
  border: 1px solid #b0b0b0;
  border-radius: 3px;
  font: inherit;
  color: #000;
}
.fs {
  border: 1px solid #acacac;
  margin: 0 -40px 0 16px;
  padding: 0;
  min-width: 0;
}
.fs legend {
  margin-left: 4px;
  padding: 0 10px 0 5px;
  line-height: 16px;
  white-space: pre;
}
.fs legend.lg-wide { padding: 0 6px 0 8px; }
.fs-info { margin-top: 6px; padding: 7px 0 5px 0; }
.fs-gauge { margin-top: 10px; padding: 10px 0 4px 0; }
.fs-comp { margin-top: 12px; padding: 10px 0 4px 0; }

.frow {
  display: flex;
  align-items: center;
  height: 24px;
  margin: 0 0 4px 36px;
}
.frow:last-child { margin-bottom: 0; }
.frow-s { height: 22px; }
.frow label { width: 52px; flex: none; white-space: nowrap; padding-top: 1px; }
.frow .lbl-grip { width: 36px; margin: 0 4px; }
.field {
  height: 100%;
  background: #fff;
  border: 1px solid #aaa;
  padding: 0 2px;
  line-height: 21px;
  flex: none;
  color: #111;
  white-space: nowrap;
}
.f-wide { width: 350px; }
.f-half { width: 138px; padding: 0 3px; }
.f-sel {
  display: flex;
  align-items: center;
  justify-content: space-between;
  padding-right: 6px;
  padding-left: 1px;
}
.caret {
  display: inline-block;
  width: 1px;
  height: 16px;
  background: #000;
  vertical-align: -3px;
  margin-left: 1px;
}
.pick { margin-left: 9px; flex: none; }

.iconrow {
  display: flex;
  gap: 12px;
  height: 16px;
  margin: 0 0 7px 14px;
}
.iconrow-c { margin-bottom: 6px; }
.gridbox {
  height: 193px;
  margin-left: 7px;
  border-left: 1px solid #8c8c8c;
  border-bottom: 1px solid #8c8c8c;
}
.grid {
  border-collapse: collapse;
  width: 460px;
  table-layout: fixed;
}
.grid th, .grid td {
  height: 19px;
  padding: 0 1px;
  border: 1px solid #8c8c8c;
  border-left: 0;
  font-size: 12px;
  line-height: 16px;
  font-weight: normal;
  background: #fff;
  color: #111;
}
.grid th { background: #f0f0f0; text-align: center; }
.c-id { width: 185px; }

.vbar { background: #f0f0f0; padding: 0 1px 0 0; }
.vthumb { height: 399px; background: #a8a8a8; border: 1px solid #8c8c8c; }
.hbar { background: #fff; height: 11px; }
.hthumb {
  width: 456px;
  height: 10px;
  background: #a8a8a8;
  border-top: 1px solid #707070;
}
.corner { background: #f0f0f0; }

.preview {
  flex: 1;
  min-width: 0;
  padding-left: 6px;
  display: flex;
  flex-direction: column;
}
.preview-title {
  height: 16px;
  text-align: center;
  line-height: 16px;
  flex: none;
}
.preview-view {
  display: block;
  width: 423px;
  height: 539px;
  background: linear-gradient(48deg, #3668ff 0%, #7cb0ff 55%, #a2ceff 100%);
}
.ax { font: bold 15px "Liberation Sans", sans-serif; }
.ax-z { fill: #0000e0; }
.ax-x { fill: #f01020; }

.log-row {
  flex: 1;
  min-height: 0;
  display: flex;
  margin-top: 5px;
  padding: 0 0 1px 1px;
}
.log {
  width: 896px;
  background: #fff;
  border: 1px solid #8a8f96;
}
.log-tools {
  flex: 1;
  display: flex;
  flex-direction: column;
  align-items: flex-start;
  padding-top: 3px;
}
.log-book { margin-left: 4px; }
.log-t { font: bold 5px "Liberation Sans", sans-serif; fill: #fff; text-anchor: middle; }
.log-active {
  margin-top: 4px;
  width: 28px;
  height: 27px;
  background: #c4c4c4;
  border: 2px solid #606060;
  padding: 1px 0 0 4px;
}

/* 3D scene */
.scene {
  grid-column: 2;
  grid-row: 1 / span 2;
  position: relative;
  padding-left: 1px;
  display: flex;
  flex-direction: column;
  overflow: hidden;
}
.scene-top {
  height: 64px;
  flex: none;
  background: #fff;
  background-image: linear-gradient(#ddd, #ddd);
  background-size: 100% 1px;
  background-position: 0 27px;
  background-repeat: no-repeat;
  border-bottom: 1px solid #868c90;
}
.scene-mid {
  height: 26px;
  flex: none;
  background: #fff;
  border-bottom: 2px solid #5aa0b8;
}
.scene-view {
  display: block;
  width: 416px;
  height: 716px;
  flex: none;
  background: linear-gradient(#b4b5b7, #c8c9cb 20%, #e8e9eb 85%);
}
.rule text { font: 11px "Liberation Sans", sans-serif; fill: #a82020; text-anchor: middle; }
.triad path { fill: none; stroke: #0a0af0; stroke-width: 1.200; }
.tri-t { font: 15px "Liberation Sans", sans-serif; fill: #1a1af0; text-anchor: middle; }
.tri-s { font-size: 12px; }

.tooltip {
  position: absolute;
  left: 84px;
  top: 323px;
  width: 141px;
  height: 71px;
  background: #f0f0f0;
  border: 1px solid #a0a0a0;
  display: flex;
  color: #222;
  font-size: 16px;
  line-height: 20px;
  letter-spacing: .2px;
}
.grip {
  width: 6px;
  margin: 2px 0 0 3px;
  background-image: radial-gradient(circle, #aaa 1px, transparent 1.200px);
  background-size: 3px 4px;
}
.tip-text { margin: 6px 0 0 8px; white-space: nowrap; }

.callout {
  position: absolute;
  border: 3px solid #ff2010;
  border-radius: 3px;
  pointer-events: none;
}
.callout-tree { left: 23px; top: 251px; width: 166px; height: 32px; }
.callout-form { left: 553px; top: 304px; width: 219px; height: 43px; }
.callout-tip { left: 80px; top: 314px; width: 153px; height: 84px; border-width: 4px; }

.watermark {
  position: absolute;
  left: 261px;
  top: 785px;
  font-size: 13px;
  line-height: 18px;
  letter-spacing: 1.500px;
  color: #7c7c7c;
  white-space: nowrap;
}

/* strip below the window */
.taskbar {
  grid-column: 1;
  grid-row: 2;
  display: flex;
  background: #fff;
  height: 7px;
}
.tk { border-right: 1px solid #ddd; }
.tk-a { width: 190px; }
.tk-b { width: 84px; }
.tk-gap { width: 10px; border-right: 1px solid #9aa; }
.tk-rest {
  flex: 1;
  background: #e6e8ea;
  padding-left: 82px;
  display: flex;
  align-items: flex-start;
  overflow: hidden;
}
.tk-rest span { color: #1a1af0; font-size: 12px; line-height: 9px; margin-left: -3px; }
```
